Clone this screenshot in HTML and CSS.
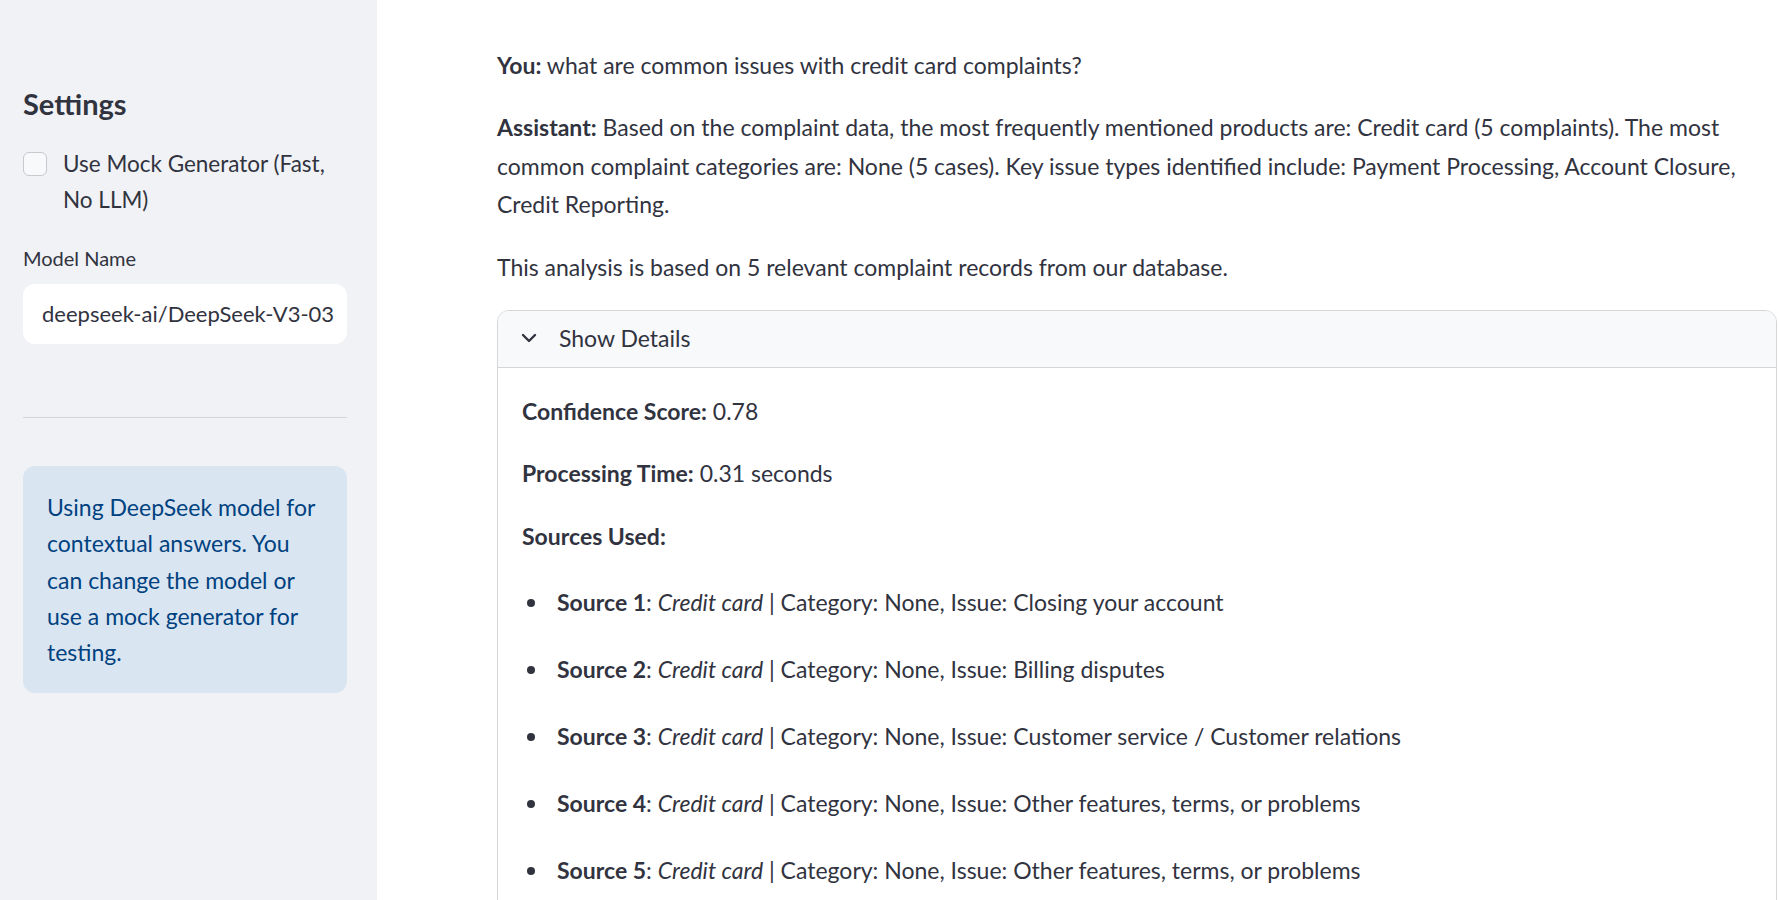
FILE: index.html
```html
<!DOCTYPE html>
<html lang="en">
<head>
<meta charset="utf-8">
<title>Complaint Assistant</title>
<link rel="stylesheet" href="styles.css">
</head>
<body>
<div class="app">
  <aside class="sidebar">
    <h2 class="side-title">Settings</h2>
    <label class="check">
      <span class="check-box"></span>
      <span class="check-label">Use Mock Generator (Fast, No LLM)</span>
    </label>
    <div class="field">
      <div class="field-label">Model Name</div>
      <div class="text-input">deepseek-ai/DeepSeek-V3-03</div>
    </div>
    <hr class="divider">
    <div class="info">Using DeepSeek model for contextual answers. You can change the model or use a mock generator for testing.</div>
  </aside>
  <main class="main">
    <p class="para"><b>You:</b> what are common issues with credit card complaints?</p>
    <p class="para"><b>Assistant:</b> Based on the complaint data, the most frequently mentioned products are: Credit card (5 complaints). The most common complaint categories are: None (5 cases). Key issue types identified include: Payment Processing, Account Closure, Credit Reporting.</p>
    <p class="para">This analysis is based on 5 relevant complaint records from our database.</p>
    <div class="expander">
      <div class="exp-head">
        <svg class="chev" viewBox="0 0 24 24" width="24" height="24"><path d="M6 9l6 6 6-6" fill="none" stroke="#31333F" stroke-width="2.4" stroke-linecap="round" stroke-linejoin="round"/></svg>
        <span class="exp-title">Show Details</span>
      </div>
      <div class="exp-body">
        <p class="para"><b>Confidence Score:</b> 0.78</p>
        <p class="para"><b>Processing Time:</b> 0.31 seconds</p>
        <p class="para"><b>Sources Used:</b></p>
        <ul class="sources">
          <li><b>Source 1</b>: <i>Credit card</i> | Category: None, Issue: Closing your account</li>
          <li><b>Source 2</b>: <i>Credit card</i> | Category: None, Issue: Billing disputes</li>
          <li><b>Source 3</b>: <i>Credit card</i> | Category: None, Issue: Customer service / Customer relations</li>
          <li><b>Source 4</b>: <i>Credit card</i> | Category: None, Issue: Other features, terms, or problems</li>
          <li><b>Source 5</b>: <i>Credit card</i> | Category: None, Issue: Other features, terms, or problems</li>
        </ul>
      </div>
    </div>
  </main>
</div>
</body>
</html>
```
FILE: styles.css
```css
* { box-sizing: border-box; }
html, body { margin: 0; padding: 0; height: 100%; }
body {
  font-family: "Lato", "Open Sans", sans-serif;
  color: #31333F;
  font-size: 23px;
  background: #fff;
  overflow: hidden;
}
b { font-weight: 700; }
.app { display: flex; height: 100vh; }
.sidebar {
  width: 377px;
  flex: 0 0 377px;
  background: #f0f2f6;
  padding: 84px 30px 0 23px;
  display: flex;
  flex-direction: column;
}
.side-title {
  margin: 0;
  font-size: 29px;
  font-weight: 700;
  line-height: 40px;
}
.check {
  display: flex;
  align-items: flex-start;
  gap: 16px;
  margin-top: 22px;
  line-height: 36px;
}
.check-box {
  flex: 0 0 24px;
  width: 24px;
  height: 24px;
  margin-top: 6px;
  border: 1px solid #c7c9cf;
  border-radius: 6px;
  background: #f8f9fb;
}
.check-label { font-size: 22.5px; }
.field { margin-top: 25px; }
.field-label { font-size: 20px; line-height: 30px; }
.text-input {
  margin-top: 11px;
  height: 60px;
  background: #fff;
  border-radius: 12px;
  padding: 0 10px 0 19px;
  line-height: 60px;
  white-space: nowrap;
  overflow: hidden;
  font-size: 22px;
}
.divider {
  margin: 73px 0 0;
  border: 0;
  border-top: 1px solid #d5d6da;
}
.info {
  margin-top: 48px;
  background: #dae5f2;
  color: #004280;
  border-radius: 12px;
  padding: 23px 24px 23px;
  line-height: 36.3px;
}
.main {
  flex: 1;
  padding: 46px 2px 0 120px;
  min-width: 0;
}
.para { margin: 0 0 24px; line-height: 38.4px; }
.main > .para:nth-child(3) { margin-bottom: 23px; }
.expander {
  border: 1px solid #d6d6d9;
  border-radius: 12px;
  overflow: hidden;
  margin-top: 24px;
}
.exp-head {
  height: 57px;
  background: #f8f9fb;
  border-bottom: 1px solid #d6d6d9;
  display: flex;
  align-items: center;
  padding: 0 0 2px 19px;
  gap: 18px;
}
.chev { flex: 0 0 auto; }
.exp-title { font-size: 23px; }
.exp-body { padding: 24px 24px 0; }
.sources { margin: 28px 0 0; padding-left: 35px; list-style: none; }
.sources li { position: relative; line-height: 38.4px; margin-bottom: 28.6px; }
.sources li::before {
  content: "";
  position: absolute;
  left: -30px;
  top: 16px;
  width: 8px;
  height: 8px;
  border-radius: 50%;
  background: #31333F;
}
```
